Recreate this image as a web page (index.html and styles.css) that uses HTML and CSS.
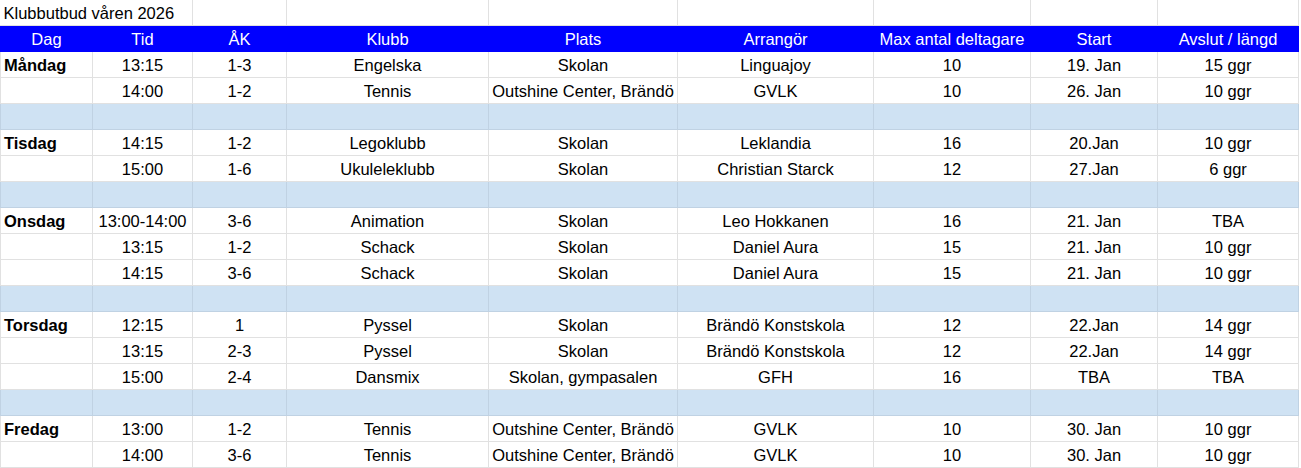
FILE: index.html
```html
<!DOCTYPE html>
<html lang="sv">
<head>
<meta charset="utf-8">
<title>Klubbutbud våren 2026</title>
<link rel="stylesheet" href="styles.css">
</head>
<body>
<table class="sheet">
  <colgroup>
    <col class="c-dag"><col class="c-tid"><col class="c-ak"><col class="c-klubb"><col class="c-plats"><col class="c-arr"><col class="c-max"><col class="c-start"><col class="c-slut">
  </colgroup>
  <tr class="title-row">
    <td class="title" colspan="2">Klubbutbud våren 2026</td>
    <td></td><td></td><td></td><td></td><td></td><td></td><td class="last"></td>
  </tr>
  <tr class="head">
    <th>Dag</th><th>Tid</th><th>ÅK</th><th>Klubb</th><th>Plats</th><th>Arrangör</th><th>Max antal deltagare</th><th>Start</th><th>Avslut / längd</th>
  </tr>
  <tr><td class="day">Måndag</td><td>13:15</td><td>1-3</td><td>Engelska</td><td>Skolan</td><td>Linguajoy</td><td>10</td><td>19. Jan</td><td>15 ggr</td></tr>
  <tr><td class="day"></td><td>14:00</td><td>1-2</td><td>Tennis</td><td>Outshine Center, Brändö</td><td>GVLK</td><td>10</td><td>26. Jan</td><td>10 ggr</td></tr>
  <tr class="sep"><td></td><td></td><td></td><td></td><td></td><td></td><td></td><td></td><td></td></tr>
  <tr><td class="day">Tisdag</td><td>14:15</td><td>1-2</td><td>Legoklubb</td><td>Skolan</td><td>Leklandia</td><td>16</td><td>20.Jan</td><td>10 ggr</td></tr>
  <tr><td class="day"></td><td>15:00</td><td>1-6</td><td>Ukuleleklubb</td><td>Skolan</td><td>Christian Starck</td><td>12</td><td>27.Jan</td><td>6 ggr</td></tr>
  <tr class="sep"><td></td><td></td><td></td><td></td><td></td><td></td><td></td><td></td><td></td></tr>
  <tr><td class="day">Onsdag</td><td>13:00-14:00</td><td>3-6</td><td>Animation</td><td>Skolan</td><td>Leo Hokkanen</td><td>16</td><td>21. Jan</td><td>TBA</td></tr>
  <tr><td class="day"></td><td>13:15</td><td>1-2</td><td>Schack</td><td>Skolan</td><td>Daniel Aura</td><td>15</td><td>21. Jan</td><td>10 ggr</td></tr>
  <tr><td class="day"></td><td>14:15</td><td>3-6</td><td>Schack</td><td>Skolan</td><td>Daniel Aura</td><td>15</td><td>21. Jan</td><td>10 ggr</td></tr>
  <tr class="sep"><td></td><td></td><td></td><td></td><td></td><td></td><td></td><td></td><td></td></tr>
  <tr><td class="day">Torsdag</td><td>12:15</td><td>1</td><td>Pyssel</td><td>Skolan</td><td>Brändö Konstskola</td><td>12</td><td>22.Jan</td><td>14 ggr</td></tr>
  <tr><td class="day"></td><td>13:15</td><td>2-3</td><td>Pyssel</td><td>Skolan</td><td>Brändö Konstskola</td><td>12</td><td>22.Jan</td><td>14 ggr</td></tr>
  <tr><td class="day"></td><td>15:00</td><td>2-4</td><td>Dansmix</td><td>Skolan, gympasalen</td><td>GFH</td><td>16</td><td>TBA</td><td>TBA</td></tr>
  <tr class="sep"><td></td><td></td><td></td><td></td><td></td><td></td><td></td><td></td><td></td></tr>
  <tr><td class="day">Fredag</td><td>13:00</td><td>1-2</td><td>Tennis</td><td>Outshine Center, Brändö</td><td>GVLK</td><td>10</td><td>30. Jan</td><td>10 ggr</td></tr>
  <tr><td class="day"></td><td>14:00</td><td>3-6</td><td>Tennis</td><td>Outshine Center, Brändö</td><td>GVLK</td><td>10</td><td>30. Jan</td><td>10 ggr</td></tr>
</table>
</body>
</html>
```
FILE: styles.css
```css
html, body {
  margin: 0;
  padding: 0;
  background: #ffffff;
}
body {
  font-family: "Liberation Sans", Arial, sans-serif;
  font-size: 16.5px;
  color: #000000;
}
.sheet {
  border-collapse: collapse;
  table-layout: fixed;
  width: 1298px;
}
.c-dag { width: 92px; }
.c-tid { width: 100px; }
.c-ak { width: 94px; }
.c-klubb { width: 202px; }
.c-plats { width: 189px; }
.c-arr { width: 196px; }
.c-max { width: 157px; }
.c-start { width: 127px; }
.c-slut { width: 141px; }

.sheet td, .sheet th {
  height: 26px;
  padding: 2px 3px 0;
  box-sizing: border-box;
  border: 1px solid #e1e1e1;
  text-align: center;
  vertical-align: middle;
  white-space: nowrap;
  overflow: hidden;
  line-height: 19px;
  font-weight: normal;
}
.title-row td {
  height: 25px;
  border-top: none;
}
.title-row .title {
  text-align: left;
  border-left: none;
  overflow: visible;
}
.head th {
  background: #0000ff;
  color: #ffffff;
  border: 1px solid #0000ff;
}
.sheet td.day {
  text-align: left;
  font-weight: bold;
}
.sep td {
  background: #cfe2f3;
  border-color: #c0d2e3;
}
```
